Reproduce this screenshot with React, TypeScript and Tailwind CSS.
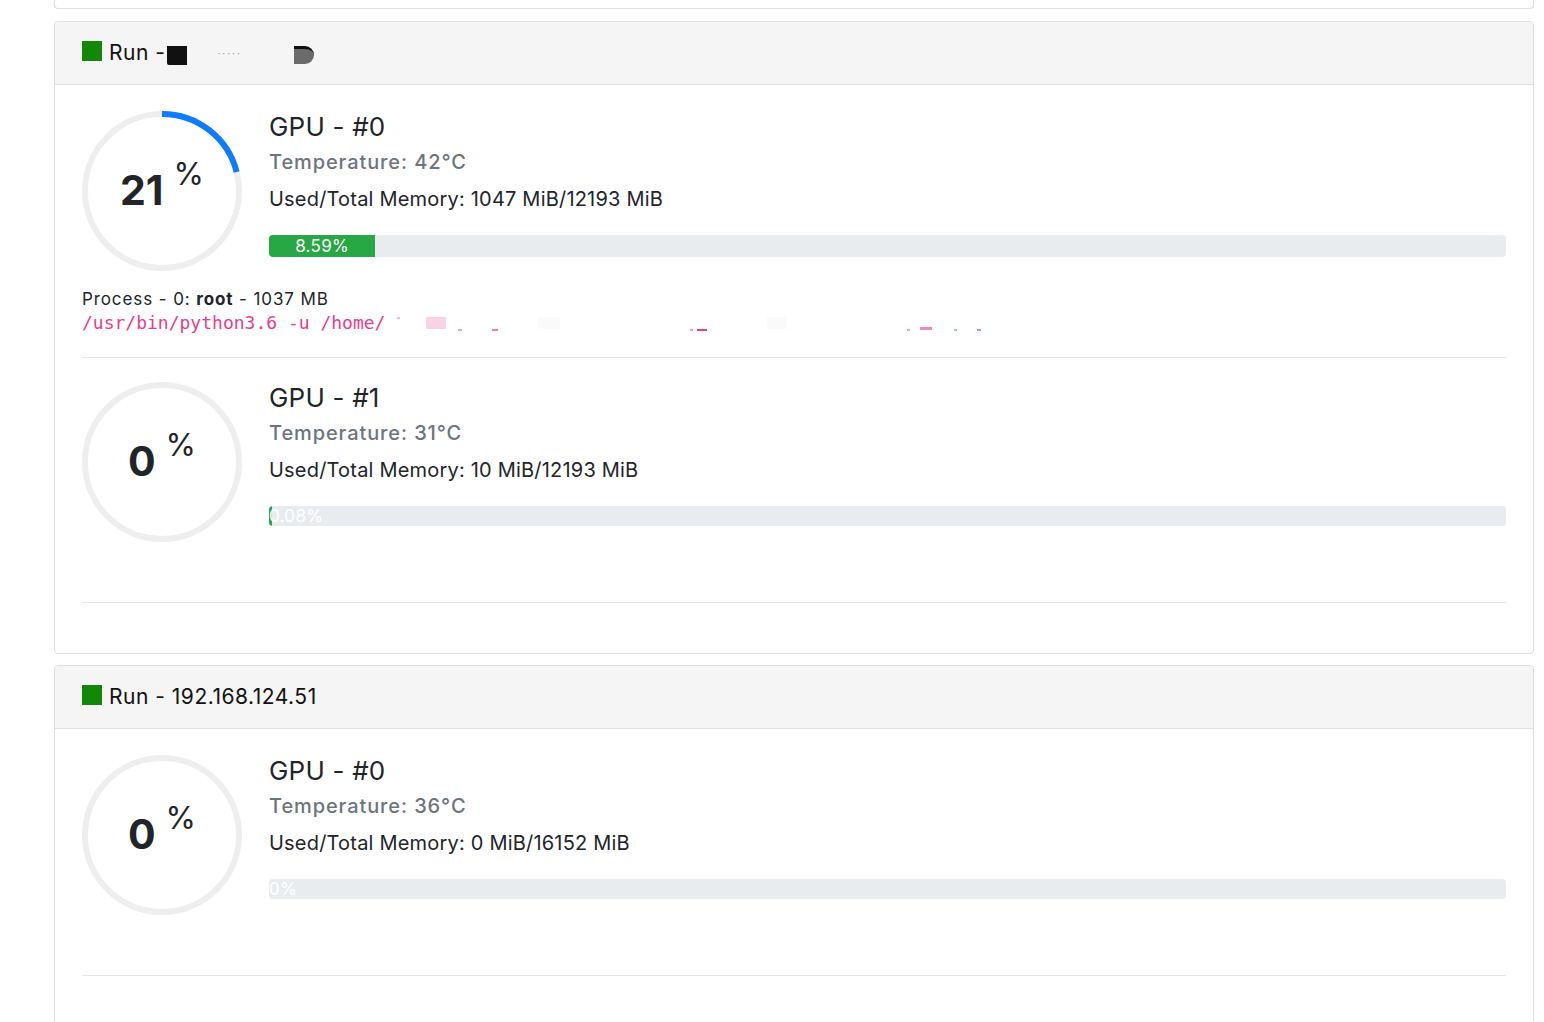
import React from "react";

type Process = { pid: number; user: string; mem: number; cmd: string };
type Gpu = { id: number; util: number; temp: number; used: number; total: number; processes: Process[] };
type Server = { name: string; hidden?: boolean; gpus: Gpu[] };

const servers: Server[] = [
  {
    name: "Run -",
    hidden: true,
    gpus: [
      {
        id: 0,
        util: 21,
        temp: 42,
        used: 1047,
        total: 12193,
        processes: [{ pid: 0, user: "root", mem: 1037, cmd: "/usr/bin/python3.6 -u /home/" }],
      },
      { id: 1, util: 0, temp: 31, used: 10, total: 12193, processes: [] },
    ],
  },
  {
    name: "Run - 192.168.124.51",
    gpus: [{ id: 0, util: 0, temp: 36, used: 0, total: 16152, processes: [] }],
  },
];

const R = 77;
const C = 2 * Math.PI * R;

function UtilCircle({ util }: { util: number }) {
  return (
    <div className="relative w-[160px] h-[160px] shrink-0">
      <svg width="160" height="160" viewBox="0 0 160 160">
        <circle cx="80" cy="80" r={R} fill="none" stroke="#eeeeee" strokeWidth="6" />
        {util > 0 && (
          <circle
            cx="80"
            cy="80"
            r={R}
            fill="none"
            stroke="#0f7bff"
            strokeWidth="6"
            strokeDasharray={`${(C * util) / 100} ${C}`}
            transform="rotate(-90 80 80)"
          />
        )}
      </svg>
      <div className="absolute inset-0 flex items-center justify-center text-[#212529]">
        <span className="text-[41px] font-bold leading-none mt-[-2px]">{util}</span>
        <span className="text-[31px] leading-none ml-[10px] mb-[36px]">%</span>
      </div>
    </div>
  );
}

function MemoryBar({ used, total, tall }: { used: number; total: number; tall?: boolean }) {
  const pct = parseFloat(((used / total) * 100).toFixed(2));
  return (
    <div className={`w-full flex overflow-hidden rounded bg-[#e9ecef] ${tall ? "h-[22px]" : "h-[20px]"}`}>
      <div
        className="flex flex-col justify-center text-center whitespace-nowrap bg-[#28a745] text-white text-[17px] leading-none tracking-[0.3px]"
        style={{ width: pct > 0 ? `max(${pct}%, 3px)` : 0 }}
      >
        {pct}%
      </div>
    </div>
  );
}

function GpuRow({ gpu }: { gpu: Gpu }) {
  return (
    <div>
      <div className="flex gap-[27px]">
        <UtilCircle util={gpu.util} />
        <div className="flex-1 flex flex-col pt-[1px]">
          <div className="text-[26px] leading-[30px] text-[#212529] tracking-[0.2px]">GPU - #{gpu.id}</div>
          <div className="mt-[6px] text-[20px] leading-[28px] font-medium tracking-[0.9px] text-[#6c757d]">
            Temperature: {gpu.temp}°C
          </div>
          <div className="mt-[9px] text-[20px] leading-[28px] tracking-[0.2px] text-[#212529]">
            Used/Total Memory: {gpu.used} MiB/{gpu.total} MiB
          </div>
          <div className="mt-[22px]">
            <MemoryBar used={gpu.used} total={gpu.total} tall={gpu.processes.length > 0} />
          </div>
        </div>
      </div>
      <div className="mt-4 mb-[22px] min-h-[22px]">
        {gpu.processes.map((p) => (
          <div key={p.pid}>
            <div className="text-[17px] leading-[24px] tracking-[0.9px] text-[#212529]">
              Process - {p.pid}: <b>{p.user}</b> - {p.mem} MB
            </div>
            <div className="flex items-center text-[18px] leading-[24px] text-[#e83e8c] font-['DejaVu_Sans_Mono',monospace]">
              <span>{p.cmd}</span>
              <span className="w-[3px] h-[2px] bg-[#f3b6d3] ml-[12px] mb-[10px]" />
              <span className="w-[20px] h-[12px] bg-[#f8d2e5] ml-[26px]" />
              <span className="w-[4px] h-[2px] bg-[#f0a0c6] ml-[12px] mt-[14px]" />
              <span className="w-[6px] h-[2px] bg-[#ec7fb3] ml-[30px] mt-[14px]" />
              <span className="w-[22px] h-[12px] bg-[#fafafa] ml-[40px]" />
              <span className="w-[3px] h-[2px] bg-[#f0a0c6] ml-[130px] mt-[14px]" />
              <span className="w-[10px] h-[2px] bg-[#e83e8c] ml-[4px] mt-[14px]" />
              <span className="w-[20px] h-[12px] bg-[#fafafa] ml-[60px]" />
              <span className="w-[3px] h-[2px] bg-[#f0a0c6] ml-[120px] mt-[14px]" />
              <span className="w-[12px] h-[3px] bg-[#f28bbd] ml-[10px] mt-[10px]" />
              <span className="w-[3px] h-[2px] bg-[#f0a0c6] ml-[22px] mt-[14px]" />
              <span className="w-[4px] h-[2px] bg-[#ec7fb3] ml-[20px] mt-[14px]" />
            </div>
          </div>
        ))}
      </div>
      <hr className="border-0 border-t border-[#e5e5e5] mb-[24px]" />
    </div>
  );
}

function ServerCard({ server }: { server: Server }) {
  return (
    <div className="border border-[#dfdfdf] rounded-[4px] overflow-hidden">
      <div className="h-[63px] px-[27px] flex items-center gap-[7px] bg-[#f5f5f5] border-b border-[#dfdfdf] text-[21px] tracking-[0.5px] text-[#111]">
        <span className="w-[20px] h-[20px] bg-[#138807] mb-[4px]" />
        <span className="flex items-center">
          {server.name}
          {server.hidden && (
            <>
              <span className="ml-[2px] w-[20px] h-[19px] bg-[#111] rounded-bl-[2px] mt-[5px]" />
              <span className="ml-[30px] text-[10px] text-[#999] tracking-[2px]">·····</span>
              <span className="ml-[52px] w-[20px] h-[18px] bg-[#6b6b6b] rounded-r-full rounded-bl-[4px] mt-[4px] border-t-[3px] border-[#111]" />
            </>
          )}
        </span>
      </div>
      <div className="px-[27px] pt-[26px] pb-[26px]">
        {server.gpus.map((g) => (
          <GpuRow key={g.id} gpu={g} />
        ))}
      </div>
    </div>
  );
}

export default function App() {
  return (
    <div className="min-h-screen bg-white pl-[54px] pr-[10px] font-['Inter','Noto_Sans',sans-serif]">
      <div className="h-[9px] border-x border-b border-[#dfdfdf] rounded-b-[4px]" />
      <div className="mt-3 flex flex-col gap-[11px]">
        {servers.map((s, i) => (
          <ServerCard key={i} server={s} />
        ))}
      </div>
    </div>
  );
}
